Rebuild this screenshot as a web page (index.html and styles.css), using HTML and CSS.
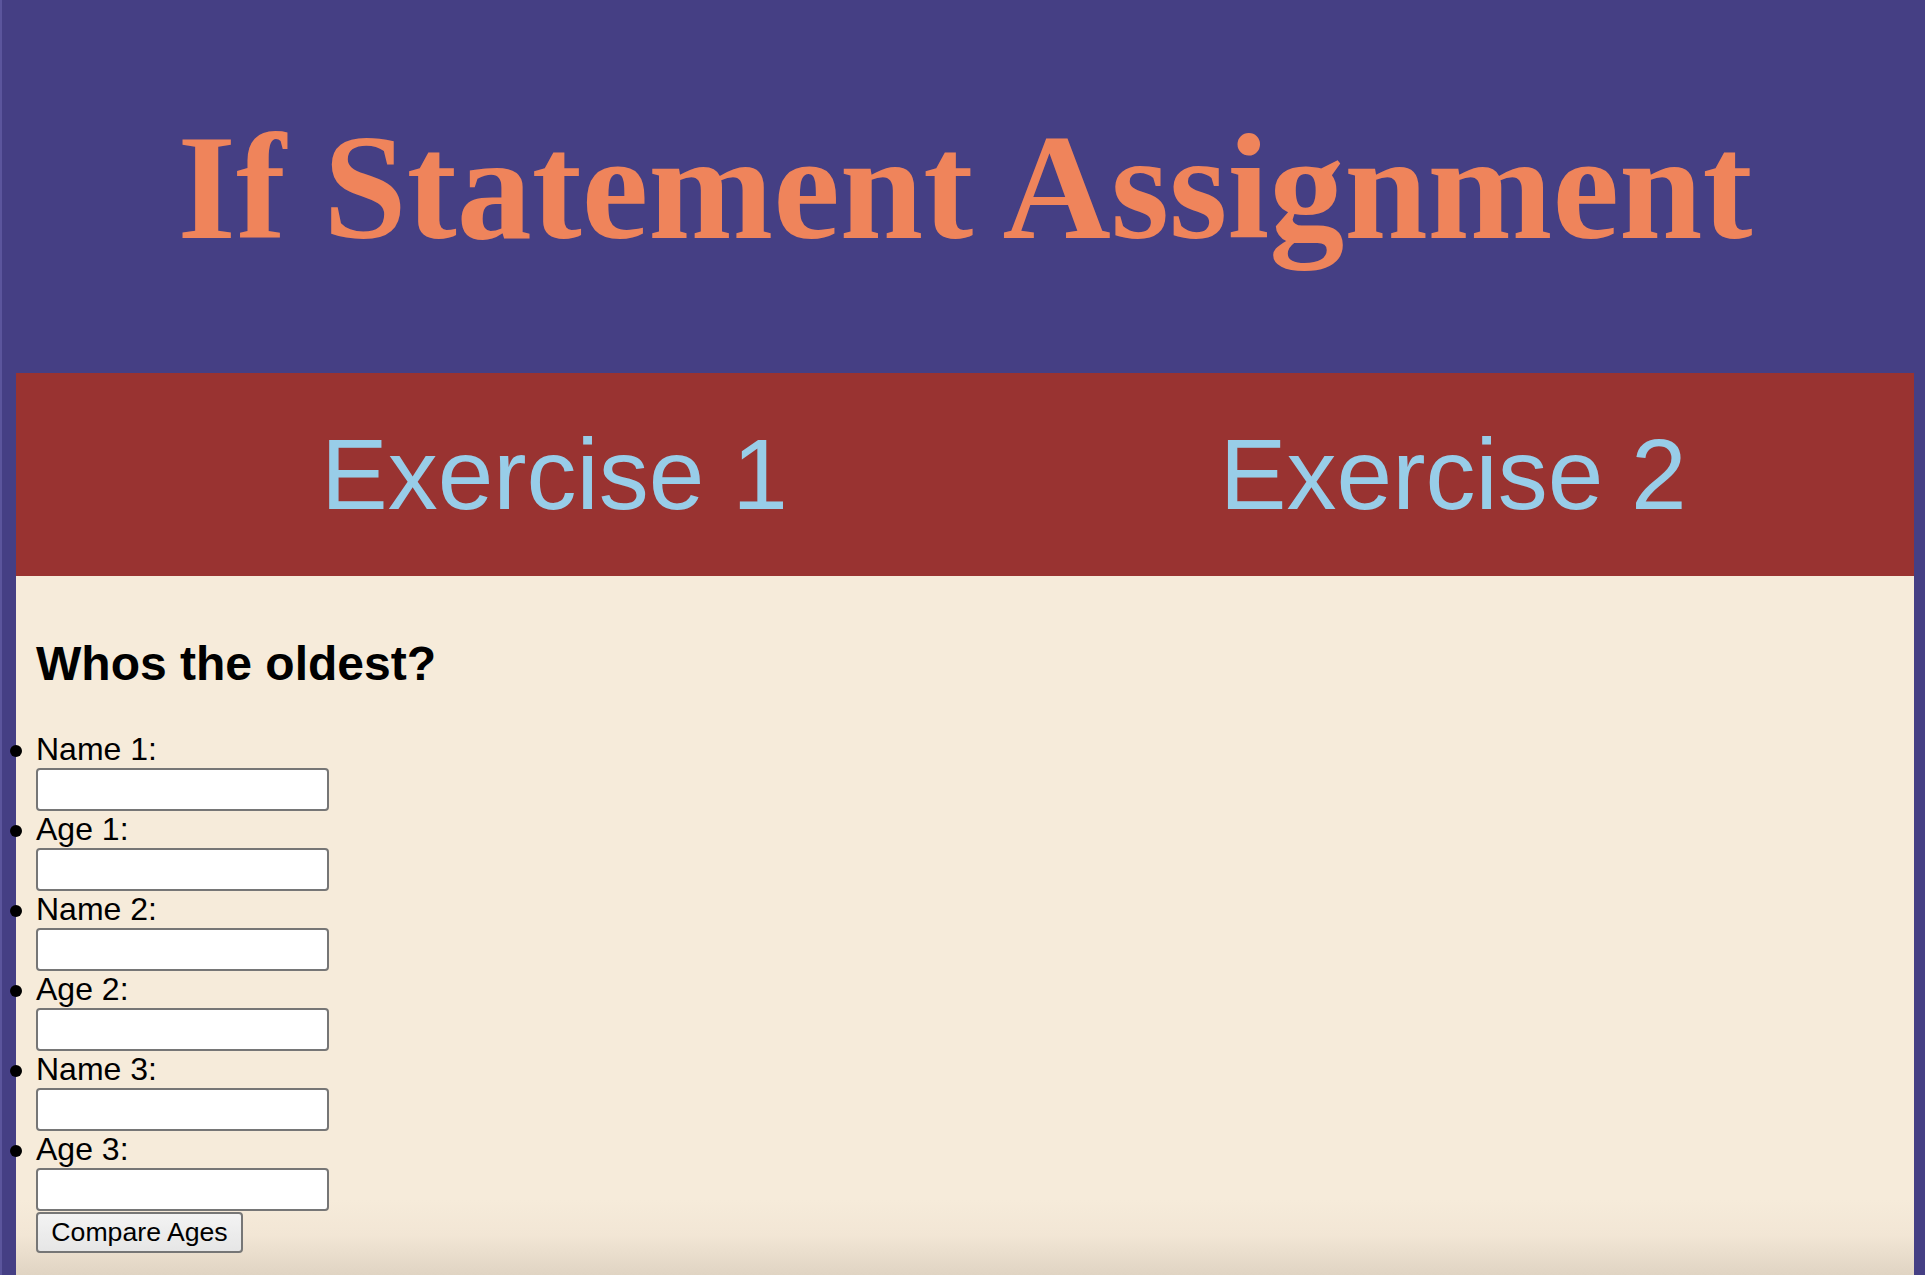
FILE: index.html
```html
<!DOCTYPE html>
<html lang="en">
<head>
<meta charset="utf-8">
<title>If Statement Assignment</title>
<link rel="stylesheet" href="styles.css">
</head>
<body>
  <header class="banner">
    <h1 class="title">If Statement Assignment</h1>
  </header>
  <nav class="tabs">
    <a class="tab" href="#ex1">Exercise 1</a>
    <a class="tab" href="#ex2">Exercise 2</a>
  </nav>
  <main class="panel">
    <h2 class="panel-title">Whos the oldest?</h2>
    <ul class="fields">
      <li class="field"><label class="field-label" for="n1">Name 1:</label><input class="field-input" id="n1" type="text"></li>
      <li class="field"><label class="field-label" for="a1">Age 1:</label><input class="field-input" id="a1" type="text"></li>
      <li class="field"><label class="field-label" for="n2">Name 2:</label><input class="field-input" id="n2" type="text"></li>
      <li class="field"><label class="field-label" for="a2">Age 2:</label><input class="field-input" id="a2" type="text"></li>
      <li class="field"><label class="field-label" for="n3">Name 3:</label><input class="field-input" id="n3" type="text"></li>
      <li class="field"><label class="field-label" for="a3">Age 3:</label><input class="field-input" id="a3" type="text"></li>
    </ul>
    <button class="compare-btn" type="button">Compare Ages</button>
  </main>
</body>
</html>
```
FILE: styles.css
```css
html {
  background: #453f84;
  border-left: 2px solid #5b559c;
}

body {
  box-sizing: border-box;
  margin: 0;
  padding: 0 11px 0 14px;
  min-height: 100vh;
  display: flex;
  flex-direction: column;
  font-family: "Liberation Sans", Arial, sans-serif;
}

.banner {
  display: block;
}

.title {
  margin: 100.5px 0;
  font-family: "Liberation Serif", "Times New Roman", serif;
  font-weight: bold;
  font-size: 150px;
  line-height: 172px;
  color: #ef845b;
  text-align: center;
}

.tabs {
  height: 203px;
  display: flex;
  align-items: center;
  padding-left: 305px;
  gap: 432px;
  background: #993331;
}

.tab {
  font-size: 100px;
  line-height: 115px;
  color: #98cde8;
  text-decoration: none;
}

.panel {
  flex: 1;
  padding: 20px;
  background: linear-gradient(to bottom, #f6ebda calc(100% - 75px), #f2e6d5 calc(100% - 40px), #e0d4c3 100%);
}

.panel-title {
  margin: 40px 0;
  font-size: 48px;
  font-weight: bold;
  line-height: 55px;
  color: #000;
}

.fields {
  margin: 0;
  padding: 0;
  list-style: none;
  font-size: 32px;
  color: #000;
}

.field {
  position: relative;
}

.field::before {
  content: "";
  position: absolute;
  left: -26px;
  top: 14px;
  width: 12px;
  height: 12px;
  border-radius: 50%;
  background: #000;
}

.field-label {
  display: block;
  line-height: 37px;
}

.field-input {
  display: block;
  box-sizing: border-box;
  width: 293px;
  height: 43px;
  margin: 0;
  border: 2px solid #767676;
  border-radius: 4px;
  background: #fff;
  font-size: 26px;
}

.compare-btn {
  display: block;
  box-sizing: border-box;
  width: 207px;
  margin: 1px 0 0;
  padding: 3px 0;
  border: 2px solid #767676;
  border-radius: 4px;
  background: linear-gradient(to bottom, #f3f3f3, #e6e6e6);
  font-family: "Liberation Sans", Arial, sans-serif;
  font-size: 26.67px;
  line-height: 31px;
  color: #000;
  text-align: center;
}
```
